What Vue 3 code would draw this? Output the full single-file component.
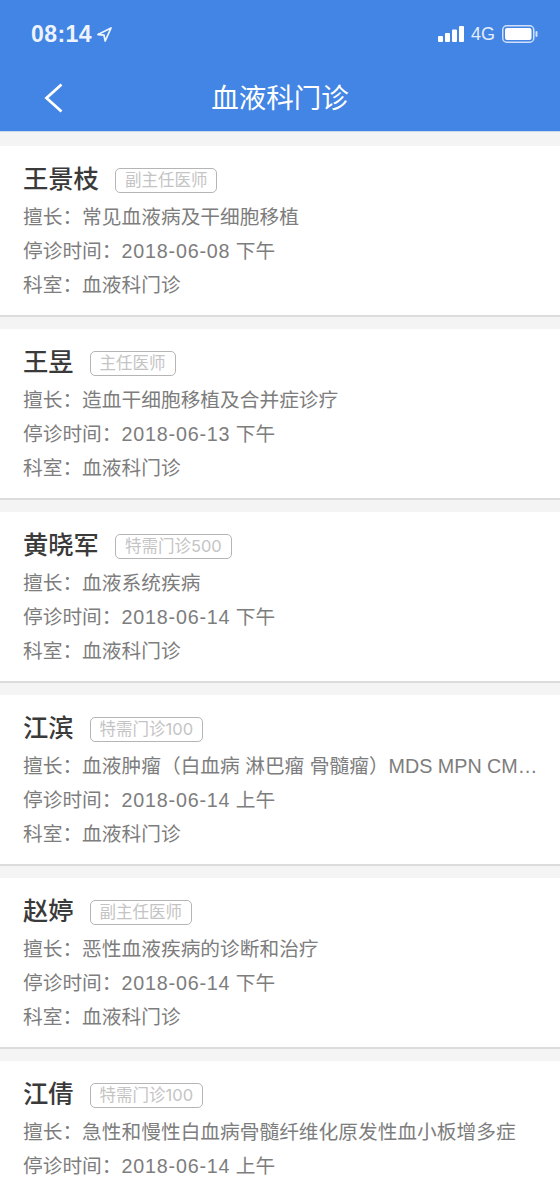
<template>
  <div class="page">
    <header class="top">
      <div class="status">
        <div class="clock">
          <span>08:14</span>
          <svg width="15" height="15" viewBox="0 0 15 15"><path d="M14 1 1 7.500l6 .6 1.200 5.900z" fill="none" stroke="#eef4fd" stroke-width="1.800" stroke-linejoin="round"/></svg>
        </div>
        <div class="signal">
          <svg width="27" height="16" viewBox="0 0 27 16" fill="#fff">
            <rect x="0" y="10" width="5" height="6" rx="1"/>
            <rect x="7" y="7" width="5" height="9" rx="1"/>
            <rect x="14" y="3.500" width="5" height="12.500" rx="1"/>
            <rect x="21" y="0" width="5" height="16" rx="1"/>
          </svg>
          <span class="net">4G</span>
          <svg class="batt" width="36" height="18" viewBox="0 0 36 18">
            <rect x=".75" y=".75" width="31" height="16.500" rx="4" fill="none" stroke="#cfe0f8" stroke-width="1.500"/>
            <rect x="3" y="3" width="26.500" height="12" rx="2" fill="#fff"/>
            <rect x="33.500" y="6" width="2" height="6" rx="1" fill="#cfe0f8"/>
          </svg>
        </div>
      </div>
      <div class="nav">
        <svg class="back" width="20" height="30" viewBox="0 0 20 30"><path d="M17.500 1.500 2.500 15 17.500 28.500" fill="none" stroke="#fff" stroke-width="2.800"/></svg>
        <h1>血液科门诊</h1>
      </div>
    </header>
    <div class="list">
      <section v-for="d in doctors" :key="d.name" class="card">
        <div class="head">
          <b>{{ d.name }}</b>
          <span class="tag">{{ d.title }}</span>
        </div>
        <p>擅长：{{ d.skill }}</p>
        <p>停诊时间：<span class="date">{{ d.date }}</span> {{ d.half }}</p>
        <p>科室：血液科门诊</p>
      </section>
    </div>
  </div>
</template>

<script setup>
const doctors = [
  { name: '王景枝', title: '副主任医师', skill: '常见血液病及干细胞移植', date: '2018-06-08', half: '下午' },
  { name: '王昱', title: '主任医师', skill: '造血干细胞移植及合并症诊疗', date: '2018-06-13', half: '下午' },
  { name: '黄晓军', title: '特需门诊500', skill: '血液系统疾病', date: '2018-06-14', half: '下午' },
  { name: '江滨', title: '特需门诊100', skill: '血液肿瘤（白血病 淋巴瘤 骨髓瘤）MDS MPN CML等疾病', date: '2018-06-14', half: '上午' },
  { name: '赵婷', title: '副主任医师', skill: '恶性血液疾病的诊断和治疗', date: '2018-06-14', half: '下午' },
  { name: '江倩', title: '特需门诊100', skill: '急性和慢性白血病骨髓纤维化原发性血小板增多症', date: '2018-06-14', half: '上午' }
]
</script>

<style>
html, body { margin: 0; background: #f4f4f4; }
</style>

<style scoped>
.page {
  height: 1177px;
  overflow: hidden;
  background: #f4f4f4;
  font-family: "Liberation Sans", "Noto Sans CJK SC", sans-serif;
}
.top {
  height: 131px;
  background: #4285e4;
  border-bottom: 1px solid #c9d9ee;
  color: #fff;
}
.status {
  height: 68px;
  display: flex;
  justify-content: space-between;
  align-items: center;
  padding: 0 22px 0 31px;
}
.clock, .signal { display: flex; align-items: center; }
.clock {
  font: 600 23px "Liberation Sans", sans-serif;
  color: #eef4fd;
  gap: 5px;
  letter-spacing: .4px;
}
.net {
  font: 18px "Liberation Sans", sans-serif;
  color: #e4eefb;
  margin: 0 7px 0 6px;
}
.nav {
  position: relative;
  box-sizing: border-box;
  height: 60px;
  padding-bottom: 4px;
  display: flex;
  align-items: center;
  justify-content: center;
}
.back { position: absolute; left: 44px; top: 15px; }
h1 {
  margin: 0;
  font-size: 27.500px;
  font-weight: 400;
}
.list {
  padding-top: 14px;
  display: flex;
  flex-direction: column;
  gap: 12px;
}
.card {
  flex: none;
  box-sizing: border-box;
  height: 171px;
  padding: 14px 20px 0 23px;
  background: #fff;
  border-bottom: 2px solid #dcdcdc;
}
.head {
  display: flex;
  align-items: center;
  height: 34px;
  gap: 16px;
  margin-bottom: 6px;
}
.head b {
  font-size: 25.300px;
  font-weight: 500;
  color: #3a3a3a;
}
.tag {
  box-sizing: border-box;
  height: 25px;
  line-height: 23px;
  margin-top: 6px;
  padding: 0 9px;
  border: 1px solid #b5b5b5;
  border-radius: 5px;
  font-family: Inter, "Noto Sans CJK SC", sans-serif;
  font-size: 16.500px;
  color: #c4c4c4;
}
p {
  margin: 0;
  height: 34px;
  line-height: 34px;
  font-size: 19.720px;
  color: #7d7d7d;
  white-space: nowrap;
  overflow: hidden;
  text-overflow: ellipsis;
}
.date { letter-spacing: .8px; }
</style>
